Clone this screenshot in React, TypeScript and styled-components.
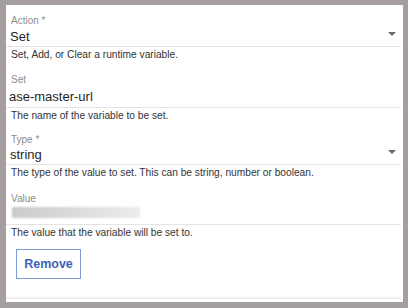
import React from "react";
import styled, { createGlobalStyle } from "styled-components";

const Global = createGlobalStyle`
  html, body { margin: 0; padding: 0; background: #a49e9e; }
  body { font-family: "Liberation Sans", Arial, sans-serif; }
`;

const Frame = styled.div`
  width: 408px;
  height: 308px;
  box-sizing: border-box;
  padding: 5px 5px 6px 6px;
`;

const Panel = styled.div`
  background: #ffffff;
  height: 297px;
  box-sizing: border-box;
  padding: 10px 2px 0 0;
  display: flex;
  flex-direction: column;
`;

const Field = styled.div<{ $gap: number }>`
  display: flex;
  flex-direction: column;
  margin-bottom: ${(p) => p.$gap}px;
`;

const Label = styled.div`
  font-size: 10px;
  line-height: 12px;
  height: 12px;
  color: #8d8d8d;
  padding-left: 5px;
`;

const InputRow = styled.div<{ $select: boolean; $h: number }>`
  display: flex;
  justify-content: space-between;
  align-items: flex-end;
  box-sizing: border-box;
  height: ${(p) => p.$h + 1}px;
  border-bottom: 1px solid #e4e4e4;
  font-size: 13px;
  line-height: 15px;
  color: #1f1f1f;
  padding: 0 5px ${(p) => (p.$select ? 2 : 3)}px ${(p) => (p.$select ? 4 : 3)}px;
`;

const Arrow = styled.span`
  width: 0;
  height: 0;
  border-left: 4px solid transparent;
  border-right: 4px solid transparent;
  border-top: 4px solid #6a6a6a;
  margin-bottom: 8px;
`;

const Blurred = styled.div`
  align-self: flex-start;
  width: 128px;
  height: 11px;
  margin: 2px 0 0 3px;
  background: linear-gradient(90deg, #c9c9c9, #e2e2e2 70%, #ececec);
  filter: blur(1px);
`;

const Helper = styled.div`
  font-size: 10.2px;
  line-height: 13px;
  color: #333;
  padding-left: 5px;
  margin-top: 1px;
`;

const ButtonRow = styled.div`
  padding: 10px 0 0 10px;
  height: 48px;
  border-bottom: 2px solid #efefef;
`;

const RemoveButton = styled.button`
  width: 65px;
  height: 30px;
  background: #fff;
  border: 1px solid #7e9dd6;
  color: #3d64b4;
  font-family: "Liberation Sans", Arial, sans-serif;
  font-weight: bold;
  font-size: 12.5px;
  padding: 0;
`;

type FieldProps = {
  label: string;
  value?: string;
  select?: boolean;
  blurred?: boolean;
  help: string;
  rowHeight: number;
  gap: number;
};

const FormField = ({ label, value, select, blurred, help, rowHeight, gap }: FieldProps) => (
  <Field $gap={gap}>
    <Label>{label}</Label>
    <InputRow $select={!!select} $h={rowHeight}>
      {blurred ? <Blurred /> : <span>{value}</span>}
      {select && <Arrow />}
    </InputRow>
    <Helper>{help}</Helper>
  </Field>
);

export default function App() {
  return (
    <>
      <Global />
      <Frame>
        <Panel>
          <FormField
            label="Action *"
            value="Set"
            select
            rowHeight={19}
            gap={13}
            help="Set, Add, or Clear a runtime variable."
          />
          <FormField
            label="Set"
            value="ase-master-url"
            rowHeight={21}
            gap={12}
            help="The name of the variable to be set."
          />
          <FormField
            label="Type *"
            value="string"
            select
            rowHeight={18}
            gap={14}
            help="The type of the value to set. This can be string, number or boolean."
          />
          <FormField
            label="Value"
            blurred
            rowHeight={19}
            gap={0}
            help="The value that the variable will be set to."
          />
          <ButtonRow>
            <RemoveButton>Remove</RemoveButton>
          </ButtonRow>
        </Panel>
      </Frame>
    </>
  );
}
